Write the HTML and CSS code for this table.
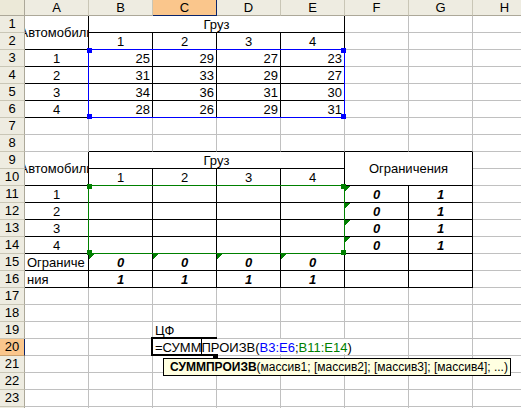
FILE: index.html
```html
<!DOCTYPE html>
<html lang="ru">
<head>
<meta charset="utf-8">
<title>Excel</title>
<link rel="stylesheet" href="styles.css">
</head>
<body>
<div class="sheet">
  <div class="grid">
    <!-- column headers -->
    <div class="corner"></div>
    <div class="ch">A</div><div class="ch">B</div><div class="ch sel">C</div><div class="ch">D</div>
    <div class="ch">E</div><div class="ch">F</div><div class="ch">G</div><div class="ch">H</div>

    <!-- row 1 -->
    <div class="rh">1</div>
    <div class="c m2r br bb vc clip">Автомобили</div>
    <div class="c m4c br bb ctr">Груз</div>
    <div class="c"></div><div class="c"></div><div class="c"></div>
    <!-- row 2 -->
    <div class="rh">2</div>
    <div class="c br bb ctr">1</div><div class="c br bb ctr">2</div><div class="c br bb ctr">3</div><div class="c br bb ctr">4</div>
    <div class="c"></div><div class="c"></div><div class="c"></div>
    <!-- row 3 -->
    <div class="rh">3</div>
    <div class="c br bb ctr">1</div>
    <div class="c br bb num">25</div><div class="c br bb num">29</div><div class="c br bb num">27</div><div class="c br bb num">23</div>
    <div class="c"></div><div class="c"></div><div class="c"></div>
    <!-- row 4 -->
    <div class="rh">4</div>
    <div class="c br bb ctr">2</div>
    <div class="c br bb num">31</div><div class="c br bb num">33</div><div class="c br bb num">29</div><div class="c br bb num">27</div>
    <div class="c"></div><div class="c"></div><div class="c"></div>
    <!-- row 5 -->
    <div class="rh">5</div>
    <div class="c br bb ctr">3</div>
    <div class="c br bb num">34</div><div class="c br bb num">36</div><div class="c br bb num">31</div><div class="c br bb num">30</div>
    <div class="c"></div><div class="c"></div><div class="c"></div>
    <!-- row 6 -->
    <div class="rh">6</div>
    <div class="c br bb ctr">4</div>
    <div class="c br bb num">28</div><div class="c br bb num">26</div><div class="c br bb num">29</div><div class="c br bb num">31</div>
    <div class="c"></div><div class="c"></div><div class="c"></div>
    <!-- row 7 -->
    <div class="rh">7</div>
    <div class="c"></div><div class="c"></div><div class="c"></div><div class="c"></div>
    <div class="c"></div><div class="c"></div><div class="c"></div><div class="c"></div>
    <!-- row 8 -->
    <div class="rh">8</div>
    <div class="c"></div>
    <div class="c bb"></div><div class="c bb"></div><div class="c bb"></div><div class="c bb"></div>
    <div class="c bb"></div><div class="c bb"></div><div class="c"></div>
    <!-- row 9 -->
    <div class="rh">9</div>
    <div class="c m2r br bb vc clip">Автомобили</div>
    <div class="c m4c br bb ctr">Груз</div>
    <div class="c m2r m2c br bb vc">Ограничения</div>
    <div class="c"></div>
    <!-- row 10 -->
    <div class="rh">10</div>
    <div class="c br bb ctr">1</div><div class="c br bb ctr">2</div><div class="c br bb ctr">3</div><div class="c br bb ctr">4</div>
    <div class="c"></div>
    <!-- row 11 -->
    <div class="rh">11</div>
    <div class="c br bb ctr">1</div>
    <div class="c br bb"></div><div class="c br bb"></div><div class="c br bb"></div><div class="c br bb"></div>
    <div class="c br bb ctr bi err">0</div><div class="c br bb ctr bi">1</div>
    <div class="c"></div>
    <!-- row 12 -->
    <div class="rh">12</div>
    <div class="c br bb ctr">2</div>
    <div class="c br bb"></div><div class="c br bb"></div><div class="c br bb"></div><div class="c br bb"></div>
    <div class="c br bb ctr bi err">0</div><div class="c br bb ctr bi">1</div>
    <div class="c"></div>
    <!-- row 13 -->
    <div class="rh">13</div>
    <div class="c br bb ctr">3</div>
    <div class="c br bb"></div><div class="c br bb"></div><div class="c br bb"></div><div class="c br bb"></div>
    <div class="c br bb ctr bi err">0</div><div class="c br bb ctr bi">1</div>
    <div class="c"></div>
    <!-- row 14 -->
    <div class="rh">14</div>
    <div class="c br bb ctr">4</div>
    <div class="c br bb"></div><div class="c br bb"></div><div class="c br bb"></div><div class="c br bb"></div>
    <div class="c br bb ctr bi err">0</div><div class="c br bb ctr bi">1</div>
    <div class="c"></div>
    <!-- row 15 -->
    <div class="rh">15</div>
    <div class="c br bb">Ограниче</div>
    <div class="c br bb ctr bi err">0</div><div class="c br bb ctr bi err">0</div><div class="c br bb ctr bi err">0</div><div class="c br bb ctr bi err">0</div>
    <div class="c br bb"></div><div class="c br bb"></div>
    <div class="c"></div>
    <!-- row 16 -->
    <div class="rh">16</div>
    <div class="c br bb">ния</div>
    <div class="c br bb ctr bi">1</div><div class="c br bb ctr bi">1</div><div class="c br bb ctr bi">1</div><div class="c br bb ctr bi">1</div>
    <div class="c br bb"></div><div class="c br bb"></div>
    <div class="c"></div>
    <!-- row 17 -->
    <div class="rh">17</div>
    <div class="c"></div><div class="c"></div><div class="c"></div><div class="c"></div>
    <div class="c"></div><div class="c"></div><div class="c"></div><div class="c"></div>
    <!-- row 18 -->
    <div class="rh">18</div>
    <div class="c"></div><div class="c"></div><div class="c"></div><div class="c"></div>
    <div class="c"></div><div class="c"></div><div class="c"></div><div class="c"></div>
    <!-- row 19 -->
    <div class="rh">19</div>
    <div class="c"></div><div class="c"></div><div class="c">ЦФ</div><div class="c"></div>
    <div class="c"></div><div class="c"></div><div class="c"></div><div class="c"></div>
    <!-- row 20 -->
    <div class="rh sel">20</div>
    <div class="c"></div><div class="c"></div><div class="c"></div><div class="c"></div>
    <div class="c"></div><div class="c"></div><div class="c"></div><div class="c"></div>
    <!-- row 21 -->
    <div class="rh">21</div>
    <div class="c"></div><div class="c"></div><div class="c"></div><div class="c"></div>
    <div class="c"></div><div class="c"></div><div class="c"></div><div class="c"></div>
    <!-- row 22 -->
    <div class="rh">22</div>
    <div class="c"></div><div class="c"></div><div class="c"></div><div class="c"></div>
    <div class="c"></div><div class="c"></div><div class="c"></div><div class="c"></div>
    <!-- row 23 -->
    <div class="rh">23</div>
    <div class="c"></div><div class="c"></div><div class="c"></div><div class="c"></div>
    <div class="c"></div><div class="c"></div><div class="c"></div><div class="c"></div>
    <!-- row 24 (only its top edge is in view) -->
    <div class="rh"></div>
    <div class="c"></div><div class="c"></div><div class="c"></div><div class="c"></div>
    <div class="c"></div><div class="c"></div><div class="c"></div><div class="c"></div>
  </div>

  <!-- range finder B3:E6 -->
  <div class="range range-blue"></div>
  <div class="hnd hb h-b-tl"></div><div class="hnd hb h-b-tr"></div>
  <div class="hnd hb h-b-bl"></div><div class="hnd hb h-b-br"></div>

  <!-- range finder B11:E14 -->
  <div class="range range-green"></div>
  <div class="hnd hg h-g-tl"></div><div class="hnd hg h-g-tr"></div>
  <div class="hnd hg h-g-bl"></div><div class="hnd hg h-g-br"></div>

  <!-- active cell C20 in edit mode -->
  <div class="active"></div>
  <div class="fill"></div>
  <div class="editor">=СУММ<span class="caret"></span>ПРОИЗВ(<span class="ref-b">B3:E6</span>;<span class="ref-g">B11:E14</span>)</div>

  <div class="tip"><b>СУММПРОИЗВ</b>(массив1; [массив2]; [массив3]; [массив4]; ...)</div>
</div>
</body>
</html>
```

FILE: styles.css
```css
html, body {
  margin: 0;
  padding: 0;
  background: #fff;
  overflow: hidden;
}

.sheet {
  position: relative;
  width: 521px;
  height: 408px;
  overflow: hidden;
  font-family: "Liberation Sans", Arial, sans-serif;
  font-size: 13px;
  color: #000;
}

.grid {
  display: grid;
  grid-template-columns: 25px repeat(8, 64px);
  grid-template-rows: 16px;
  grid-auto-rows: 17px;
  width: 537px;
}

.grid > div {
  box-sizing: border-box;
  white-space: nowrap;
}

/* headers */
.corner {
  background: #ECE9D8;
  border-right: 1px solid #ACA899;
  border-bottom: 1px solid #ACA899;
}
.ch {
  background: #EEECE1;
  border-right: 1px solid #C9C6B6;
  border-bottom: 1px solid #ACA899;
  text-align: center;
  line-height: 15px;
}
.rh {
  background: #EEECE1;
  border-right: 1px solid #ACA899;
  border-bottom: 1px solid #C9C6B6;
  text-align: center;
  line-height: 16px;
}
.ch.sel, .rh.sel {
  background: #FAC68C;
}
.ch.sel {
  border-right-color: #0A246A;
  border-bottom-color: #0A246A;
}
.rh.sel {
  border-right-color: #0A246A;
  border-bottom-color: #C9A06E;
}

/* cells */
.c {
  border-right: 1px solid #C0C0C0;
  border-bottom: 1px solid #C0C0C0;
  padding: 1px 2px 0;
  line-height: 15px;
}
.br { border-right-color: #000 !important; }
.bb { border-bottom-color: #000 !important; }
.ctr { text-align: center; }
.num { text-align: right; }
.bi { font-weight: bold; font-style: italic; }
.m2r { grid-row: span 2; }
.m2c { grid-column: span 2; }
.m4c { grid-column: span 4; }
.vc {
  display: flex;
  align-items: center;
  justify-content: center;
  padding: 0 2px;
}
.clip { overflow: hidden; }
.err {
  background: linear-gradient(135deg, #008000 0 3.6px, transparent 3.6px) no-repeat;
  background-size: 7px 7px;
}

/* range finders */
.range {
  position: absolute;
  box-sizing: border-box;
  left: 88px;
  width: 257px;
  height: 69px;
}
.range-blue { top: 49px; border: 1px solid #0000FF; }
.range-green { top: 185px; border: 1px solid #008000; }
.hnd {
  position: absolute;
  width: 5px;
  height: 5px;
}
.hb { background: #0000FF; }
.hg { background: #008000; }
.h-b-tl { left: 87px; top: 48px; }
.h-b-tr { left: 341px; top: 48px; }
.h-b-bl { left: 87px; top: 114px; }
.h-b-br { left: 341px; top: 114px; }
.h-g-tl { left: 87px; top: 184px; }
.h-g-tr { left: 341px; top: 184px; }
.h-g-bl { left: 87px; top: 250px; }
.h-g-br { left: 341px; top: 250px; }

/* active cell */
.active {
  position: absolute;
  box-sizing: border-box;
  left: 151px;
  top: 337px;
  width: 66px;
  height: 19px;
  border: 2px solid #000;
}
.fill {
  position: absolute;
  left: 213px;
  top: 354px;
  width: 5px;
  height: 5px;
  background: #000;
}
.editor {
  position: absolute;
  box-sizing: border-box;
  left: 153px;
  top: 339px;
  width: 205px;
  height: 15px;
  padding-left: 2px;
  background: #fff;
  line-height: 15px;
  white-space: nowrap;
}
.caret {
  display: inline-block;
  width: 0;
  height: 16px;
  margin-right: -1px;
  border-left: 1px solid #000;
  vertical-align: -3px;
}
.ref-b { color: #0000FF; }
.ref-g { color: #008000; }

/* tooltip */
.tip {
  position: absolute;
  box-sizing: border-box;
  left: 163px;
  top: 358px;
  width: 348px;
  height: 18px;
  padding-left: 6px;
  background: #FFFFE1;
  border: 1px solid #000;
  font-size: 12px;
  line-height: 16px;
  white-space: nowrap;
  overflow: hidden;
}
.tip b { font-weight: bold; }
```
